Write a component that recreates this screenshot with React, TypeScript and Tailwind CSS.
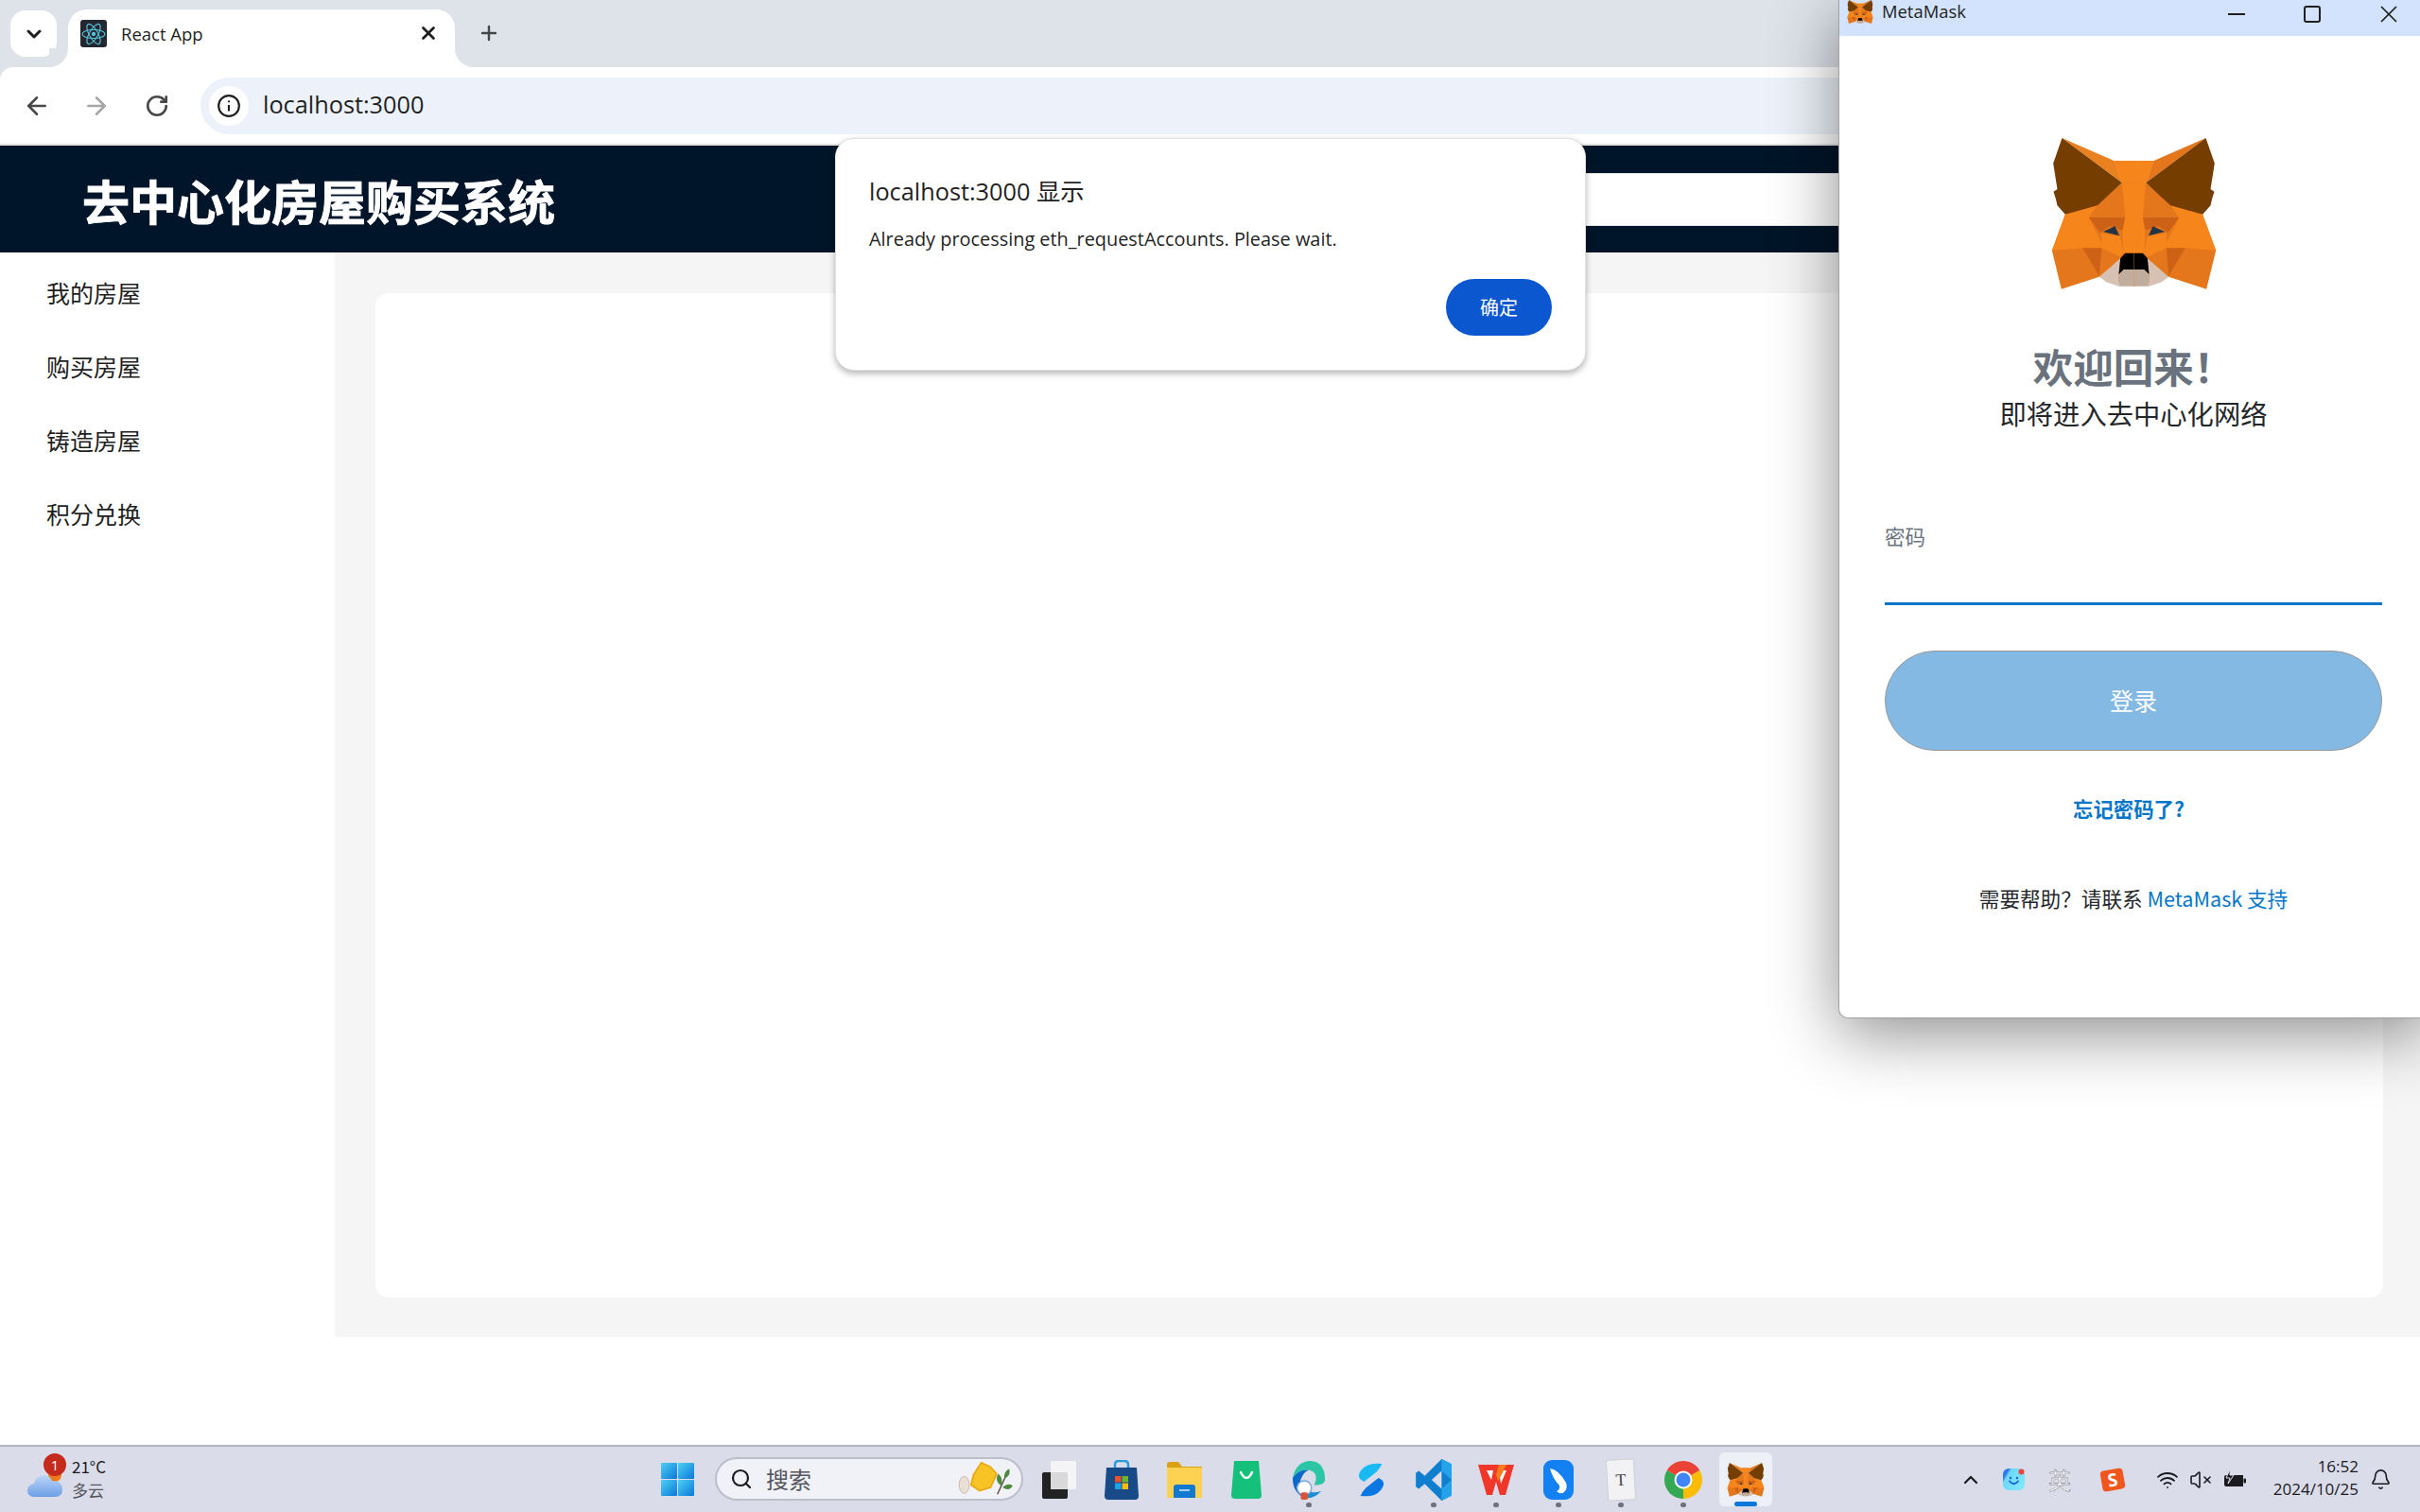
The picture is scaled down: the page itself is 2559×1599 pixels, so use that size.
import { ArrowLeft, ArrowRight, Bell, ChevronDown, ChevronUp, Plus, RotateCw, Search, VolumeX, Wifi, X } from 'lucide-react';

const cjk = '"Noto Sans CJK SC", sans-serif';

const menuItems = ['我的房屋', '购买房屋', '铸造房屋', '积分兑换'];

// half of the fox, the other half is the same polygons flipped
const FoxHalf = ({ dark }: { dark: string }) => (
  <>
    <polygon points="160,290 118,405 148,527 268,488 378,518 378,120 315,120 340,190 235,282" fill="#e4761b" />
    <polygon points="150,48 315,120 340,190" fill={dark} />
    <polygon points="315,120 378,120 378,190 340,190" fill="#f6851b" />
    <polygon points="150,48 340,190 262,262 235,282 160,290 135,262 130,240 123,218 135,210 122,128" fill="#763d00" />
    <polygon points="340,190 378,190 378,300 350,300" fill="#f6851b" />
    <polygon points="160,290 262,262 235,300 275,380 275,397 215,397 118,405" fill="#f6851b" />
    <polygon points="235,300 350,300 342,340 300,328 270,348" fill="#cd6116" />
    <polygon points="280,345 318,328 332,358" fill="#233447" />
    <polygon points="350,300 378,300 378,415 345,415 342,345" fill="#f6851b" />
    <polygon points="275,350 335,360 345,412 335,425 275,397" fill="#f6851b" />
    <polygon points="215,397 275,397 268,485" fill="#cd6116" />
    <polygon points="268,488 335,430 330,480 330,518 290,505" fill="#d7c1b3" />
    <polygon points="330,480 345,465 378,465 378,518 330,518" fill="#c0ad9e" />
    <polygon points="350,413 378,413 378,465 345,465 330,480 335,430" fill="#000000" />
  </>
);

const Fox = ({ className }: { className: string }) => (
  <svg viewBox="110 48 536 480" className={className}>
    <FoxHalf dark="#e98120" />
    <g transform="translate(756,0) scale(-1,1)">
      <FoxHalf dark="#e4761b" />
    </g>
  </svg>
);

const ReactIcon = () => (
  <div className="flex h-[29px] w-[28px] items-center justify-center rounded-[3px] bg-[#23272f]">
    <svg viewBox="-12 -12 24 24" className="h-[26px] w-[26px]" fill="none" stroke="#58c4dc" strokeWidth="1">
      <circle r="2" fill="#58c4dc" stroke="none" />
      <ellipse rx="11" ry="4.2" />
      <ellipse rx="11" ry="4.2" transform="rotate(60)" />
      <ellipse rx="11" ry="4.2" transform="rotate(120)" />
    </svg>
  </div>
);

const WinLogo = () => (
  <svg viewBox="0 0 35 35" className="h-[35px] w-[35px]">
    <defs>
      <linearGradient id="winGrad" x1="0" y1="0" x2="1" y2="1">
        <stop offset="0" stopColor="#4fd0f5" />
        <stop offset="1" stopColor="#0a78d8" />
      </linearGradient>
    </defs>
    <rect x="0" y="0" width="17" height="17" fill="url(#winGrad)" rx="1" />
    <rect x="18" y="0" width="17" height="17" fill="url(#winGrad)" rx="1" />
    <rect x="0" y="18" width="17" height="17" fill="url(#winGrad)" rx="1" />
    <rect x="18" y="18" width="17" height="17" fill="url(#winGrad)" rx="1" />
  </svg>
);

const Dumpling = () => (
  <svg viewBox="0 0 66 40" className="h-[36px] w-[62px]">
    <ellipse cx="7" cy="27" rx="6" ry="10" fill="#e9dfd4" stroke="#c9b6a5" strokeWidth="1" />
    <polygon points="27,1 38,6 45,14 38,30 25,34 15,27 18,15" fill="#f7c325" stroke="#eaa913" strokeWidth="2" />
    <path d="M46 38 L58 12" stroke="#5b4a3a" strokeWidth="1.6" fill="none" />
    <path d="M50 28 Q42 22 47 14 Q54 20 50 28Z M54 20 Q53 11 60 8 Q62 16 54 20Z M52 30 Q58 24 64 28 Q60 35 52 30Z" fill="#4f8a3c" />
  </svg>
);

const TerminalIcon = () => (
  <svg viewBox="0 0 36 40" className="h-[40px] w-[36px]">
    <rect x="9" y="0" width="27" height="30" rx="2" fill="#f4f4f6" />
    <rect x="0" y="12" width="27" height="28" rx="2" fill="#222222" />
    <rect x="9" y="12" width="18" height="18" fill="#d9d9d9" />
  </svg>
);

const StoreIcon = () => (
  <svg viewBox="0 0 36 42" className="h-[42px] w-[36px]">
    <path d="M11 10 V5 Q11 1 15 1 H21 Q25 1 25 5 V10" stroke="#2a9bdc" strokeWidth="2.5" fill="none" />
    <path d="M2 8 H34 L36 38 Q36 42 32 42 H4 Q0 42 0 38 Z" fill="#174a86" />
    <rect x="11" y="17" width="6.5" height="6.5" fill="#e8502a" />
    <rect x="18.5" y="17" width="6.5" height="6.5" fill="#6cb52d" />
    <rect x="11" y="24.5" width="6.5" height="6.5" fill="#1aa5e8" />
    <rect x="18.5" y="24.5" width="6.5" height="6.5" fill="#fbbc09" />
  </svg>
);

const FolderIcon = () => (
  <svg viewBox="0 0 37 38" className="h-[38px] w-[37px]">
    <path d="M0 3 Q0 0 3 0 H12 L16 5 H37 V38 H0 Z" fill="#dba00f" />
    <rect x="0" y="6" width="37" height="32" fill="#fdd253" />
    <path d="M7 38 V27 Q7 24 10 24 H27 Q30 24 30 27 V38 Z" fill="#1279cf" />
    <rect x="13" y="29" width="11" height="2" fill="#9fd0f5" />
  </svg>
);

const GreenBag = () => (
  <svg viewBox="0 0 32 40" className="h-[40px] w-[32px]">
    <path d="M3 0 H29 L32 36 Q32 40 28 40 H4 Q0 40 0 36 Z" fill="#15c17a" />
    <path d="M10 12 Q16 24 22 12" stroke="#ffffff" strokeWidth="2.5" fill="none" strokeLinecap="round" />
  </svg>
);

const EdgeDev = () => (
  <svg viewBox="0 0 40 44" className="h-[44px] w-[38px]">
    <path d="M2 20 Q6 1 22 1 Q38 2 38 22 Q38 28 26 28 Q32 14 20 11 Q8 10 2 20Z" fill="#2cc6a6" />
    <path d="M2 20 Q8 10 20 11 Q12 14 10 26 Q10 36 18 43 Q2 38 2 20Z" fill="#0c69c9" />
    <path d="M14 42 Q26 44 34 34 Q26 38 18 34Z" fill="#1a8fd8" />
    <circle cx="15" cy="31" r="8" fill="#ffffff" stroke="#7aa7d9" strokeWidth="1.5" />
    <rect x="11" y="36" width="8" height="8" rx="2" fill="#d8553a" />
  </svg>
);

const ZenIcon = () => (
  <svg viewBox="0 0 36 40" className="h-[40px] w-[34px]">
    <path d="M30 2 Q14 0 7 9 Q0 18 10 22 L24 11 Q28 7 30 2Z" fill="#19b9f5" />
    <path d="M6 38 Q22 40 29 31 Q36 22 26 18 L12 29 Q8 33 6 38Z" fill="#0b77e3" />
  </svg>
);

const VsCode = () => (
  <svg viewBox="0 0 36 42" className="h-[44px] w-[38px]">
    <path d="M26 0 L36 5 V37 L26 42 L9 25 L3 30 L0 28 V14 L3 12 L9 17 Z M26 12 L16 21 L26 30 Z" fill="#0e7fcf" />
    <path d="M26 0 L36 5 V37 L26 42 Z M26 12 V30 L36 21Z" fill="#25a3ea" fillRule="evenodd" />
  </svg>
);

const WpsIcon = () => (
  <svg viewBox="0 0 38 36" className="h-[36px] w-[38px]">
    <path d="M0 2 H38 L29 34 H23 L19 20 L15 34 H9 Z" fill="#f1372a" />
    <path d="M9 8 H16 L14 18Z M22 8 H30 L24 22Z" fill="#ffffff" />
    <path d="M22 2 H30 L21 20 L19 12Z" fill="#ff7a1a" />
  </svg>
);

const BlueWing = () => (
  <svg viewBox="0 0 32 42" className="h-[42px] w-[32px]">
    <rect width="32" height="42" rx="9" fill="#1481f2" />
    <path d="M7 9 Q16 10 24 24 Q26 30 22 34 Q18 37 14 33 Q18 31 17 27 Q10 20 7 9Z" fill="#ffffff" />
  </svg>
);

const NotePage = () => (
  <div className="flex h-[44px] w-[30px] rotate-[-3deg] items-center justify-center rounded-[3px] border border-[#cfcfd4] bg-[#f2f2f4] text-[18px] text-[#444444] [font-family:'Liberation_Serif',serif]">
    T
  </div>
);

const ChromeIcon = () => (
  <svg viewBox="0 0 40 40" className="h-[40px] w-[40px]">
    <path d="M20 20 L2.7 10 A20 20 0 0 1 37.3 10 Z" fill="#ea4335" />
    <path d="M20 20 L37.3 10 A20 20 0 0 1 20 40 Z" fill="#fbbc04" />
    <path d="M20 20 L20 40 A20 20 0 0 1 2.7 10 Z" fill="#34a853" />
    <circle cx="20" cy="20" r="9.5" fill="#ffffff" />
    <circle cx="20" cy="20" r="7.5" fill="#4285f4" />
  </svg>
);

const SmileIcon = () => (
  <svg viewBox="0 0 23 23" className="h-[23px] w-[23px]">
    <defs>
      <linearGradient id="smileGrad" x1="0" y1="0" x2="1" y2="0.6">
        <stop offset="0" stopColor="#2472f2" />
        <stop offset="0.22" stopColor="#2f7cf6" />
        <stop offset="0.3" stopColor="#6fd8fb" />
        <stop offset="1" stopColor="#7ee6fb" />
      </linearGradient>
    </defs>
    <rect width="23" height="23" rx="6" fill="url(#smileGrad)" />
    <circle cx="8" cy="10" r="1.2" fill="#1462e0" />
    <circle cx="15" cy="10" r="1.2" fill="#1462e0" />
    <path d="M7 13.5 Q11.5 19 16 13.5" stroke="#1462e0" strokeWidth="1.8" fill="none" strokeLinecap="round" />
    <circle cx="19.5" cy="3.5" r="3" fill="#f0443a" />
  </svg>
);

const dockIcons = [
  { key: 'terminal', icon: <TerminalIcon />, running: false },
  { key: 'store', icon: <StoreIcon />, running: false },
  { key: 'folder', icon: <FolderIcon />, running: false },
  { key: 'bag', icon: <GreenBag />, running: false },
  { key: 'edge', icon: <EdgeDev />, running: true },
  { key: 'zen', icon: <ZenIcon />, running: false },
  { key: 'vscode', icon: <VsCode />, running: true },
  { key: 'wps', icon: <WpsIcon />, running: true },
  { key: 'wing', icon: <BlueWing />, running: true },
  { key: 'note', icon: <NotePage />, running: true },
  { key: 'chrome', icon: <ChromeIcon />, running: true },
];

const BrowserChrome = () => (
  <div className="shrink-0 bg-[#dee3ea]">
    <div className="flex h-[71px]">
      <div className="ml-[11px] mt-[11px] flex h-[49px] w-[49px] items-center justify-center rounded-[16px] bg-white">
        <ChevronDown className="h-[24px] w-[24px] text-[#1f1f1f]" strokeWidth={3} />
      </div>
      <div className="relative ml-[12px] mt-[10px] flex h-[61px] w-[409px] items-center rounded-t-[20px] bg-white pl-[13px] pb-[10px]">
        <span className="absolute bottom-0 left-[-20px] h-[20px] w-[20px] bg-white">
          <span className="block h-full w-full rounded-br-[20px] bg-[#dee3ea]" />
        </span>
        <span className="absolute bottom-0 right-[-20px] h-[20px] w-[20px] bg-white">
          <span className="block h-full w-full rounded-bl-[20px] bg-[#dee3ea]" />
        </span>
        <ReactIcon />
        <span className="ml-[15px] text-[18.5px] text-[#1f1f1f] [font-family:'Open_Sans',sans-serif]">React App</span>
        <X className="absolute right-[17px] top-[14px] h-[22px] w-[22px] text-[#1f1f1f]" strokeWidth={3} />
      </div>
      <Plus className="ml-[24px] mt-[23px] h-[24px] w-[24px] text-[#474747]" strokeWidth={2.4} />
    </div>
    <div className="flex h-[81px] items-center rounded-tl-[14px] bg-white pl-[24px]">
      <ArrowLeft className="h-[30px] w-[30px] text-[#474747]" strokeWidth={2} />
      <ArrowRight className="ml-[33px] h-[30px] w-[30px] text-[#a6a6a6]" strokeWidth={2} />
      <RotateCw className="ml-[36px] h-[26px] w-[26px] text-[#474747]" strokeWidth={2.4} />
      <div className="ml-[33px] flex h-[60px] flex-1 items-center rounded-l-[30px] bg-[#edf2fa] pl-[9px]">
        <div className="flex h-[42px] w-[42px] items-center justify-center rounded-full bg-white">
          <svg viewBox="0 0 24 24" className="h-[26px] w-[26px]" fill="none" stroke="#1f1f1f" strokeWidth="2">
            <circle cx="12" cy="12" r="10" />
            <path d="M12 11 V17 M12 7 V8.6" />
          </svg>
        </div>
        <span className="mb-[2px] ml-[15px] text-[25.3px] text-[#1f1f1f] [font-family:'Open_Sans',sans-serif]">localhost:3000</span>
      </div>
    </div>
    <div className="h-[2px] bg-[#e3e5e0]" />
  </div>
);

const PageContent = () => (
  <div className="flex-1 bg-white">
    <header className="flex h-[113px] items-center justify-between bg-[#001529] pl-[87px]">
      <h1 className="text-[50px] font-bold leading-none text-white [-webkit-text-stroke:0.8px_white]" style={{ fontFamily: cjk }}>
        去中心化房屋购买系统
      </h1>
      <div className="h-[56px] w-[1400px] border-y border-[#e5e5e5] bg-white" />
    </header>
    <div className="flex h-[1147px]">
      <nav className="flex w-[354px] shrink-0 flex-col gap-[8px] pl-[49px] pt-[8px]">
        {menuItems.map((item) => (
          <div key={item} className="flex h-[70px] items-center text-[25px] text-[#1f1f1f]" style={{ fontFamily: cjk }}>
            {item}
          </div>
        ))}
      </nav>
      <main className="flex-1 bg-[#f5f5f5] pb-[42px] pl-[43px] pr-[39px] pt-[43px]">
        <div className="h-full rounded-[14px] bg-white" />
      </main>
    </div>
  </div>
);

const Taskbar = () => (
  <div className="flex h-[71px] shrink-0 items-center border-t-2 border-[#b4b5c1] bg-[#dadcea]">
    <div className="flex w-[699px] shrink-0 items-center pl-[29px]">
      <div className="relative mt-[12px] h-[23px] w-[37px]">
        <div className="absolute left-[22px] top-[-6px] h-[14px] w-[14px] rounded-full bg-[#ee7b1a]" />
        <svg viewBox="0 0 37 24" className="absolute inset-0 h-[24px] w-[37px]">
          <defs>
            <linearGradient id="cloudGrad" x1="0" y1="0" x2="0" y2="1">
              <stop offset="0" stopColor="#bcd6f8" />
              <stop offset="1" stopColor="#6d9fe6" />
            </linearGradient>
          </defs>
          <path d="M7 24 Q0 24 0 17 Q0 11 7 10 Q9 2 17 1 Q24 1 26 7 Q37 7 37 16 Q37 24 29 24 Z" fill="url(#cloudGrad)" />
        </svg>
        <div className="absolute left-[17px] top-[-22px] flex h-[24px] w-[24px] items-center justify-center rounded-full bg-[#c42b1c] text-[15px] text-white [font-family:'Open_Sans',sans-serif]">
          1
        </div>
      </div>
      <div className="mb-[3px] ml-[10px] flex flex-col text-[17px] leading-[25px]" style={{ fontFamily: cjk }}>
        <span className="text-[#1b1b1f]">21°C</span>
        <span className="text-[#55565e]">多云</span>
      </div>
    </div>
    <WinLogo />
    <div className="mb-[2px] ml-[22px] flex h-[46px] w-[326px] shrink-0 items-center rounded-full border-2 border-[#bdbecb] bg-[#f1f2f8] pl-[14px]">
      <Search className="h-[24px] w-[24px] text-[#1b1b1f]" strokeWidth={2.2} />
      <span className="ml-[14px] text-[24px] text-[#55565e]" style={{ fontFamily: cjk }}>
        搜索
      </span>
      <div className="ml-auto mr-[6px]">
        <Dumpling />
      </div>
    </div>
    <div className="ml-[5px] flex h-full shrink-0">
      {dockIcons.map((d) => (
        <div key={d.key} className="relative flex w-[66px] items-center justify-center">
          {d.icon}
          {d.running && <span className="absolute bottom-[5px] h-[5px] w-[6px] rounded-full bg-[#6f707c]" />}
        </div>
      ))}
      <div className="relative flex w-[66px] items-center justify-center">
        <div className="absolute bottom-[6px] h-[57px] w-[56px] rounded-[6px] bg-[#eef0f8]" />
        <Fox className="relative h-[38px] w-[40px]" />
        <span className="absolute bottom-[6px] h-[5px] w-[24px] rounded-full bg-[#0a78d8]" />
      </div>
    </div>
    <div className="ml-[193px] flex shrink-0 items-center">
      <ChevronUp className="h-[24px] w-[24px] text-[#1b1b1f]" strokeWidth={2.2} />
      <div className="ml-[22px]">
        <SmileIcon />
      </div>
      <span className="ml-[25px] text-[24px] leading-none text-white [-webkit-text-stroke:0.4px_#55565e]" style={{ fontFamily: cjk }}>
        英
      </span>
      <div className="ml-[32px] flex h-[22px] w-[24px] rotate-[-10deg] items-center justify-center rounded-[4px] bg-[#f0561d] text-[19px] font-bold leading-none text-white [font-family:'Open_Sans',sans-serif]">
        S
      </div>
      <Wifi className="ml-[34px] h-[24px] w-[24px] text-[#1b1b1f]" strokeWidth={1.8} />
      <VolumeX className="ml-[11px] h-[24px] w-[24px] text-[#1b1b1f]" strokeWidth={1.6} />
      <svg viewBox="0 0 24 22" className="ml-[12px] h-[22px] w-[24px]">
        <path d="M3 6 H21 V18 H3 Q1 18 1 16 V8 Q1 6 3 6Z" fill="#1b1b1f" />
        <rect x="21.5" y="9.5" width="2.5" height="5" rx="1" fill="#1b1b1f" />
        <path d="M7 0 L3 9 H7 L5 15 L11 6 H7 Z" fill="#1b1b1f" stroke="#dadcea" strokeWidth="1" />
      </svg>
    </div>
    <div className="mb-[3px] ml-auto flex flex-col items-end text-[17px] leading-[24px] text-[#1b1b1f] [font-family:'Open_Sans',sans-serif]">
      <span>16:52</span>
      <span>2024/10/25</span>
    </div>
    <Bell className="ml-[12px] mr-[30px] h-[23px] w-[23px] text-[#1b1b1f]" strokeWidth={1.7} />
  </div>
);

const AlertDialog = () => (
  <div className="absolute left-[883px] top-[146px] flex h-[246px] w-[794px] flex-col rounded-[20px] border border-[#e0e0e0] bg-white pl-[35px] pr-[35px] shadow-[0_3px_7px_rgba(0,0,0,0.3)]" style={{ fontFamily: cjk }}>
    <div className="mt-[36px] text-[25.3px] leading-[38px] text-[#1f1f1f] [font-family:'Open_Sans','Noto_Sans_CJK_SC',sans-serif]">localhost:3000 显示</div>
    <div className="mt-[18px] text-[19.9px] leading-[28px] text-[#1f1f1f] [font-family:'Open_Sans',sans-serif]">Already processing eth_requestAccounts. Please wait.</div>
    <button className="ml-auto mt-[28px] h-[60px] w-[112px] rounded-full bg-[#0b57d0] text-[20px] text-white">确定</button>
  </div>
);

const MetaMaskWindow = () => (
  <div className="absolute left-[1944px] top-0 flex h-[1077px] w-[624px] flex-col rounded-bl-[10px] border-b border-l border-[#a0a0a0] bg-white shadow-[0_16px_70px_rgba(0,0,0,0.45)]" style={{ fontFamily: cjk }}>
    <div className="relative flex h-[38px] shrink-0 items-start bg-[#d3e3fd] pl-[8px]">
      <Fox className="h-[25px] w-[28px]" />
      <span className="ml-[9px] mt-[1px] text-[18.4px] leading-[22px] text-[#1f1f1f] [font-family:'Open_Sans',sans-serif]">MetaMask</span>
      <div className="absolute left-[411px] top-[14px] h-[2px] w-[18px] bg-[#1f1f1f]" />
      <div className="absolute left-[491px] top-[6px] h-[18px] w-[18px] rounded-[3px] border-2 border-[#1f1f1f]" />
      <X className="absolute left-[566px] top-[0px] h-[30px] w-[30px] text-[#1f1f1f]" strokeWidth={1.4} />
    </div>
    <div className="flex flex-1 flex-col pl-[48px] pr-[49px]">
      <Fox className="mx-auto mt-[108px] h-[160px] w-[179px] shrink-0" />
      <h2 className="mt-[53px] text-center text-[42.5px] font-bold leading-[56px] text-[#6a737d]">欢迎回来！</h2>
      <p className="mt-[2px] text-center text-[28.3px] leading-[40px] text-[#24272a]">即将进入去中心化网络</p>
      <label className="mt-[95px] text-[21.5px] leading-[30px] text-[#6a737d]">密码</label>
      <div className="mt-[55px] h-[3px] bg-[#0376c9]" />
      <button className="mt-[48px] h-[106px] shrink-0 rounded-full border border-[#999999] bg-[#84b9e4] text-[25px] text-white">登录</button>
      <div className="mt-[46px] pr-[10px] text-center text-[21.4px] font-bold leading-[30px] text-[#0376c9]">忘记密码了?</div>
      <p className="mt-[65px] text-center text-[21.6px] leading-[30px] text-[#24272a]">
        需要帮助？请联系 <span className="text-[#0376c9]">MetaMask 支持</span>
      </p>
    </div>
  </div>
);

export default function App() {
  return (
    <div className="relative flex h-[1599px] w-[2559px] flex-col overflow-hidden bg-white">
      <BrowserChrome />
      <PageContent />
      <Taskbar />
      <AlertDialog />
      <MetaMaskWindow />
    </div>
  );
}
